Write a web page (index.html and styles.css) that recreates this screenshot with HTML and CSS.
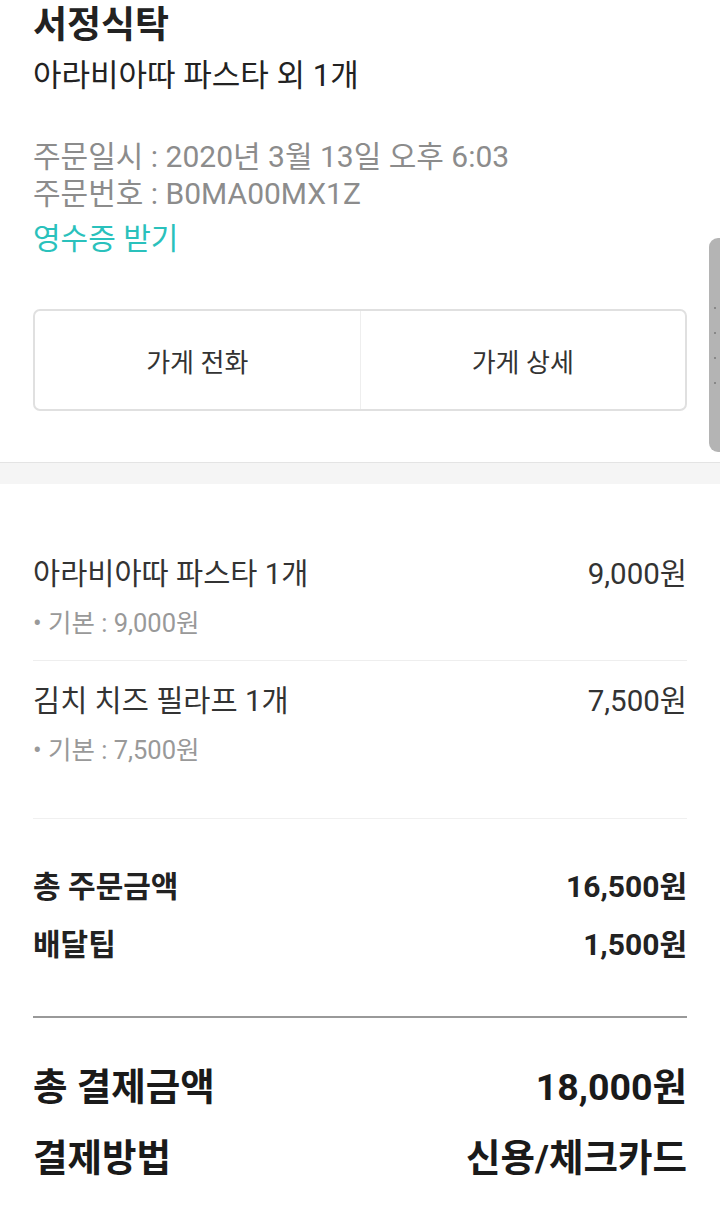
FILE: index.html
```html
<!DOCTYPE html>
<html lang="ko">
<head>
    <meta charset="UTF-8">
    <meta name="viewport" content="width=device-width, initial-scale=1.0">
    <title>주문상세</title>
    <link rel="stylesheet" href="styles.css">
</head>
<body>
    <div class="header">
        <h1 class="store">서정식탁</h1>
        <div class="summary">아라비아따 파스타 외 1개</div>
        <div class="meta">
            <div>주문일시 : 2020년 3월 13일 오후 6:03</div>
            <div>주문번호 : B0MA00MX1Z</div>
        </div>
        <a class="receipt" href="#">영수증 받기</a>

        <div class="actions">
            <div class="action">가게 전화</div>
            <div class="action">가게 상세</div>
        </div>
    </div>

    <div class="band"></div>

    <div class="items">
        <div class="item">
            <div class="row">
                <span>아라비아따 파스타 1개</span>
                <span>9,000원</span>
            </div>
            <div class="option">• 기본 : 9,000원</div>
        </div>
        <div class="item">
            <div class="row">
                <span>김치 치즈 필라프 1개</span>
                <span>7,500원</span>
            </div>
            <div class="option">• 기본 : 7,500원</div>
        </div>
    </div>

    <div class="totals">
        <div class="row total-row">
            <span>총 주문금액</span>
            <span>16,500원</span>
        </div>
        <div class="row total-row tip">
            <span>배달팁</span>
            <span>1,500원</span>
        </div>
    </div>

    <div class="payment">
        <div class="row pay-row">
            <span>총 결제금액</span>
            <span>18,000원</span>
        </div>
        <div class="row pay-row method">
            <span>결제방법</span>
            <span>신용/체크카드</span>
        </div>
    </div>

    <div class="scroll-handle">
        <span></span><span></span><span></span><span></span>
    </div>
</body>
</html>
```

FILE: styles.css
```css
body {
    margin: 0;
    padding: 0;
    background-color: #fff;
    font-family: Roboto, "Noto Sans CJK KR", sans-serif;
    color: #333;
}
.header {
    padding: 0 33px 51px;
    border-bottom: 1px solid #e4e4e4;
}
.store {
    margin: 0;
    font-size: 37px;
    line-height: 52px;
    font-weight: bold;
    color: #222;
}
.summary {
    font-size: 31px;
    line-height: 48px;
    color: #222;
}
.meta {
    margin-top: 38px;
    font-size: 30px;
    line-height: 37px;
    color: #8c8c8c;
}
.receipt {
    display: block;
    margin-top: 8px;
    font-size: 30px;
    line-height: 37px;
    color: #2ac1bc;
    text-decoration: none;
}
.actions {
    display: flex;
    margin-top: 52px;
    height: 98px;
    border: 2px solid #e0e0e0;
    border-radius: 7px;
}
.action {
    flex: 1;
    display: flex;
    align-items: center;
    justify-content: center;
    font-size: 26px;
    color: #333;
}
.action + .action {
    border-left: 1px solid #eee;
}
.band {
    height: 21px;
    background-color: #f5f5f5;
}
.items {
    margin: 0 33px;
    padding: 50px 0 31px;
    border-bottom: 1px solid #f0f0f0;
}
.item {
    padding: 20px 0 22px;
}
.item + .item {
    border-top: 1px solid #eee;
}
.row {
    display: flex;
    justify-content: space-between;
    align-items: center;
    font-size: 29.5px;
    line-height: 40px;
}
.option {
    margin-top: 14px;
    font-size: 25.5px;
    line-height: 30px;
    color: #999;
}
.totals {
    margin: 0 33px;
    padding: 48px 0 51px;
    border-bottom: 2px solid #999;
}
.total-row {
    font-size: 30px;
    font-weight: bold;
    color: #222;
}
.total-row.tip {
    margin-top: 18px;
}
.payment {
    margin: 0 33px;
    padding-top: 44px;
}
.pay-row {
    font-size: 37.5px;
    line-height: 50px;
    font-weight: bold;
    color: #1a1a1a;
}
.pay-row.method {
    margin-top: 21px;
}
.scroll-handle {
    position: absolute;
    top: 238px;
    right: 0;
    width: 11px;
    height: 214px;
    background-color: #b4b4b4;
    border-radius: 9px 0 0 9px;
    display: flex;
    flex-direction: column;
    align-items: center;
    padding-top: 69px;
    box-sizing: border-box;
    gap: 23px;
}
.scroll-handle span {
    width: 2px;
    height: 2px;
    background-color: #888;
}
```
